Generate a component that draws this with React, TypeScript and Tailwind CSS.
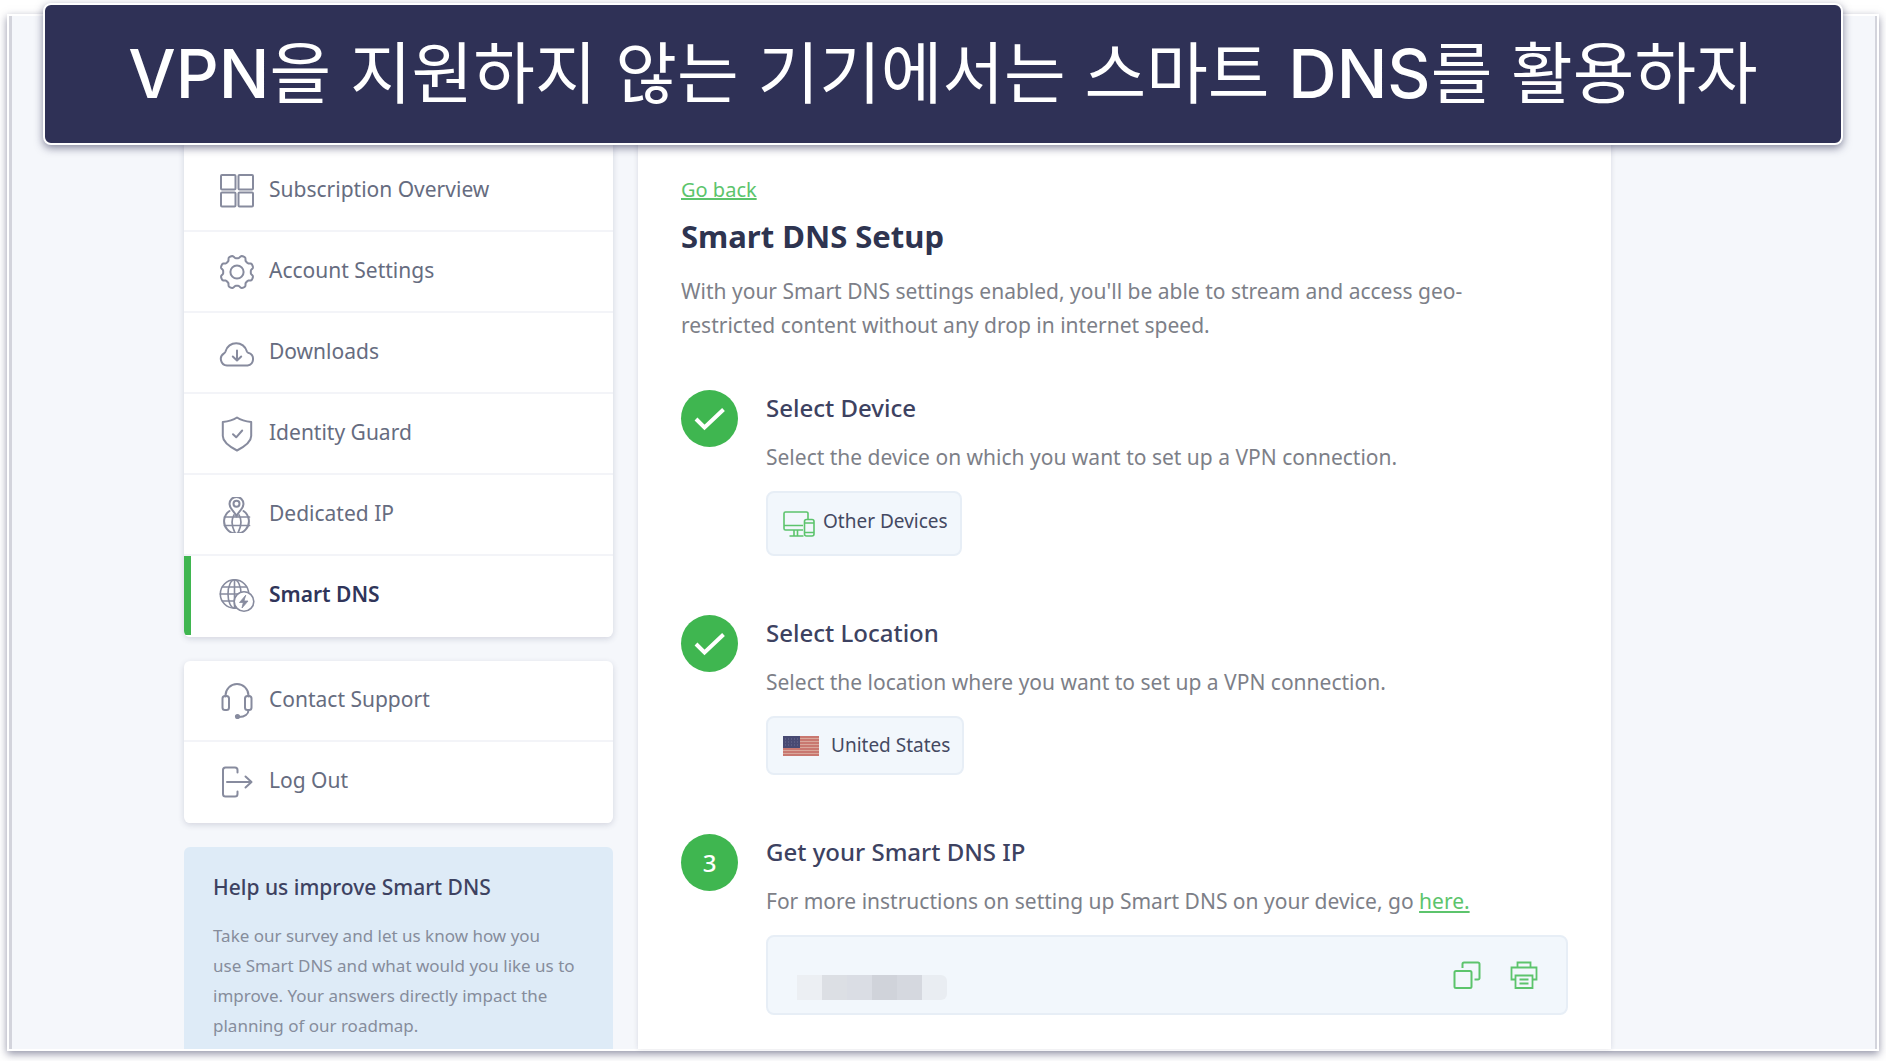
import type { ReactNode } from "react";

interface IconProps {
	children: ReactNode;
	className?: string;
}

const Icon = ({ children, className = "size-9" }: IconProps) => (
	<svg
		viewBox="0 0 36 36"
		fill="none"
		stroke="currentColor"
		strokeWidth="2"
		strokeLinecap="round"
		strokeLinejoin="round"
		aria-hidden="true"
		className={`shrink-0 ${className}`}
	>
		{children}
	</svg>
);

// wavy outline with eight soft teeth
const gearPath = () => {
	const points: string[] = [];
	for (let i = 0; i < 128; i++) {
		const angle = (i / 128) * Math.PI * 2;
		const wave = Math.tanh(-2 * Math.cos(angle * 8)) / Math.tanh(2);
		const r = 15.3 + wave * 1.5;
		points.push(
			`${(18 + r * Math.cos(angle)).toFixed(2)} ${(18 + r * Math.sin(angle)).toFixed(2)}`
		);
	}
	return `M${points.join("L")}Z`;
};

const GridIcon = () => (
	<Icon>
		<rect x="2" y="2" width="14.5" height="14.5" rx="1" />
		<rect x="19.5" y="2" width="14.5" height="14.5" rx="1" />
		<rect x="2" y="19.5" width="14.5" height="14" rx="1" />
		<rect x="19.5" y="19.5" width="14.5" height="14" rx="1" />
	</Icon>
);

const GearIcon = () => (
	<Icon>
		<path d={gearPath()} />
		<circle cx="18" cy="18" r="6.6" />
	</Icon>
);

const CloudIcon = () => (
	<Icon>
		<path d="M8 30.5a6.6 6.6 0 0 1-3-12.2c.8-.5 1.3-1.2 1.6-2.1a11 11 0 0 1 21.2 0c.3.9.9 1.5 1.8 1.7A6.5 6.5 0 0 1 28.5 30.5Z" />
		<path d="M18 15.5v9.5M13.8 21.5l4.2 4 4.2-4" />
	</Icon>
);

const ShieldIcon = () => (
	<Icon>
		<path d="M18 1.5c4 2.8 9 4 14.2 4.4V20c0 5.5-6.5 10.5-14.2 14.500C10.300 30.500 3.800 25.500 3.800 20V5.900C9 5.500 14 4.300 18 1.500Z" />
		<path d="m14 18.300 3.200 3 6-6.800" />
	</Icon>
);

const DedicatedIcon = () => (
	<Icon>
		<path d="M10.500 14a12.400 12.400 0 1 0 14 0" />
		<path d="M5.500 20h25M5.500 28.500h25M15 18c-3 5-2 12 1 18M20 18c3 5 2 12-1 18" strokeWidth="1.700" />
		<path d="M17.500 19.500c-1.300-4.500-7-7.500-7-12.500a7 7 0 0 1 14 0c0 5-5.700 8-7 12.500Z" fill="white" />
		<circle cx="17.500" cy="6.800" r="3" />
	</Icon>
);

const SmartIcon = () => (
	<Icon>
		<g strokeWidth="1.600">
			<circle cx="15.500" cy="16" r="14.200" />
			<ellipse cx="15.500" cy="16" rx="6.500" ry="14.200" />
			<path d="M15.500 1.800v28.400M1.300 16h28.400M3.500 9h24M3.500 23h24" />
		</g>
		<circle cx="25" cy="23.500" r="9.800" strokeWidth="1.600" fill="white" />
		<path d="M26.500 17.500l-6 7h3.800l-1.300 5.500 6-7h-3.800Z" fill="currentColor" strokeWidth=".8" />
	</Icon>
);

const HeadsetIcon = () => (
	<Icon>
		<path d="M6.500 13.500v-1a11.500 11.500 0 0 1 23 0v1" />
		<rect x="3.500" y="13" width="6.500" height="14" rx="2.500" />
		<rect x="26" y="13" width="6.500" height="14" rx="2.500" />
		<path d="M29.500 27c0 4-3.500 6.800-9.500 7" />
		<circle cx="18.500" cy="33.500" r="1.600" fill="currentColor" />
	</Icon>
);

const LogOutIcon = () => (
	<Icon>
		<path d="M18.500 8.500V6a2.500 2.500 0 0 0-2.500-2.500H6.500A2.500 2.500 0 0 0 4 6v24a2.500 2.500 0 0 0 2.500 2.500H16a2.500 2.500 0 0 0 2.500-2.500v-2.500" />
		<path d="M8 18h24M26.500 12.500l6 5.500-6 5.500" />
	</Icon>
);

const DevicesIcon = () => (
	<svg
		viewBox="0 0 32 26"
		fill="none"
		stroke="currentColor"
		strokeWidth="1.600"
		strokeLinejoin="round"
		aria-hidden="true"
		className="h-[26px] w-8 shrink-0 text-[#5cc46c]"
	>
		<path d="M20 19H2.500A1.500 1.500 0 0 1 1 17.500v-15A1.500 1.500 0 0 1 2.500 1h21A1.500 1.500 0 0 1 25 2.500V8" />
		<path d="M1 14.500h19M11 19v5.500M14.500 19v5.500M6.500 25h14" />
		<rect x="21.500" y="8.500" width="9.500" height="16.500" rx="2" />
		<path d="M21.500 12h9.500M21.500 21.500h9.500" />
	</svg>
);

const FlagIcon = () => (
	<svg viewBox="0 0 36 20" aria-hidden="true" className="h-5 w-9 shrink-0">
		<rect width="36" height="20" fill="#d9a79b" />
		<path d="M0 1h36M0 4h36M0 7h36M0 10h36M0 13h36M0 16h36M0 19h36" stroke="#c46a63" strokeWidth="1.500" />
		<rect width="17" height="12" fill="#484a73" />
		<path d="M2 3h14M2 6h14M2 9h14" stroke="#6d6e94" strokeDasharray="1 2" />
	</svg>
);

const CopyIcon = () => (
	<svg viewBox="0 0 28 28" fill="none" stroke="currentColor" strokeWidth="2" aria-hidden="true" className="size-7">
		<rect x="1.500" y="10" width="17" height="17" rx="1.500" />
		<path d="M9.500 7V3A1.500 1.500 0 0 1 11 1.500h14A1.500 1.500 0 0 1 26.500 3v14a1.500 1.500 0 0 1-1.500 1.500h-3.500" />
	</svg>
);

const PrinterIcon = () => (
	<svg viewBox="0 0 28 28" fill="none" stroke="currentColor" strokeWidth="1.800" aria-hidden="true" className="size-7">
		<path d="M7.500 6V1.500h13V6M5.500 18.500h-4v-12h25v12h-4" />
		<path d="M5.500 14.500h17v12.500h-17ZM9.500 18.500h9M9.500 22.500h9" />
	</svg>
);

interface NavItemProps {
	label: string;
	icon: ReactNode;
	active?: boolean;
}

const NavItem = ({ label, icon, active }: NavItemProps) => (
	<li className="border-b-2 border-[#f3f4f8] last:border-white">
		<a
			href="#"
			aria-current={active ? "page" : undefined}
			className={`flex h-[79px] items-center gap-3.5 border-l-[7px] pl-7 text-[#878b9e] ${
				active ? "border-[#3fb650]" : "border-transparent"
			}`}
		>
			{icon}
			<span
				className={`pb-1 text-[21px] leading-7 ${
					active ? "font-semibold text-[#30355a]" : "text-[#666c80]"
				}`}
			>
				{label}
			</span>
		</a>
	</li>
);

interface StepProps {
	title: string;
	description: ReactNode;
	marker: ReactNode;
	children: ReactNode;
}

const Step = ({ title, description, marker, children }: StepProps) => (
	<li className="flex gap-7">
		<div className="flex size-[57px] shrink-0 items-center justify-center rounded-full bg-[#3fb650] text-[24px] font-medium text-white">
			{marker}
		</div>
		<div className="min-w-0 flex-1">
			<h2 className="text-[24px] leading-9 font-medium text-[#3d4261]">{title}</h2>
			<p className="mt-3.5 text-[21px] leading-[34px] text-[#7d7f88]">{description}</p>
			<div className="mt-[17px]">{children}</div>
		</div>
	</li>
);

const CheckMark = () => (
	<svg viewBox="0 0 32 24" fill="none" stroke="white" strokeWidth="4" aria-hidden="true" className="h-6 w-8">
		<path d="m2 12 8.500 8.500L29.500 2.500" strokeLinejoin="miter" />
	</svg>
);

const mosaic = ["bg-[#eceff3]", "bg-[#dcdfe4]", "bg-[#dadde4]", "bg-[#d0d3da]", "bg-[#d5d8df]", "bg-[#e9edf2]"];

const Sidebar = () => (
	<aside className="flex w-[429px] shrink-0 flex-col gap-6">
		<nav className="overflow-hidden rounded-md bg-white pt-[11px] shadow-[0_2px_6px_rgba(40,45,80,0.16)]">
			<ul>
				<NavItem label="Subscription Overview" icon={<GridIcon />} />
				<NavItem label="Account Settings" icon={<GearIcon />} />
				<NavItem label="Downloads" icon={<CloudIcon />} />
				<NavItem label="Identity Guard" icon={<ShieldIcon />} />
				<NavItem label="Dedicated IP" icon={<DedicatedIcon />} />
				<NavItem label="Smart DNS" icon={<SmartIcon />} active />
			</ul>
		</nav>
		<nav className="overflow-hidden rounded-md bg-white shadow-[0_2px_6px_rgba(40,45,80,0.16)]">
			<ul>
				<NavItem label="Contact Support" icon={<HeadsetIcon />} />
				<NavItem label="Log Out" icon={<LogOutIcon />} />
			</ul>
		</nav>
		<section className="flex-1 rounded-t-md bg-[#deebf7] px-[29px] pt-6">
			<h2 className="text-[21px] leading-8 font-medium text-[#3d4261]">Help us improve Smart DNS</h2>
			<p className="mt-[18px] text-[17px] leading-[30px] text-[#868d9c]">
				Take our survey and let us know how you
				<br />
				use Smart DNS and what would you like us to improve. Your answers directly impact the planning of
				our roadmap.
			</p>
		</section>
	</aside>
);

export default function App() {
	return (
		<div className="relative flex min-h-screen flex-col bg-white px-[7px] pt-[14px] pb-[10px] font-['Noto_Sans','Noto_Sans_CJK_KR',sans-serif]">
			<header className="absolute inset-x-[43px] top-[3px] flex h-[142px] items-center justify-center rounded-lg border-2 border-white bg-[#2f3156] pb-0.5 shadow-[0_3px_9px_rgba(40,42,80,0.55)]">
				<h1 className="font-['Inter','Noto_Sans_CJK_KR',sans-serif] text-[67px] leading-none font-medium whitespace-nowrap text-white">
					VPN<span className="font-normal">을 지원하지 않는 기기에서는 스마트 </span>DNS
					<span className="font-normal">를 활용하자</span>
				</h1>
			</header>

			<div className="flex flex-1 border-2 border-white shadow-[0_3px_8px_rgba(40,42,80,0.5)]">
				<div className="flex flex-1 gap-[25px] border-r-2 border-l-[3px] border-[#d3d4dc] bg-[#f5f7fb] pt-[124px] pr-[264px] pl-[172px]">
					<Sidebar />
					<main className="min-w-0 flex-1 bg-white px-[43px] pt-9 pb-[31px] shadow-[0_0_5px_rgba(40,45,80,0.14)]">
						<a href="#" className="inline-block text-[20px] leading-7 text-[#5cc46c] underline">
							Go back
						</a>
						<h1 className="mt-3 text-[31px] leading-10 font-bold text-[#2e3450]">Smart DNS Setup</h1>
						<p className="mt-[18px] max-w-[820px] text-[21px] leading-[34px] text-[#7d7f88]">
							With your Smart DNS settings enabled, you'll be able to stream and access geo-restricted
							content without any drop in internet speed.
						</p>

						<ol className="mt-12 flex flex-col gap-[59px]">
							<Step
								title="Select Device"
								description="Select the device on which you want to set up a VPN connection."
								marker={<CheckMark />}
							>
								<button className="flex h-[65px] items-center gap-2 rounded-lg border-2 border-[#e7eef6] bg-[#f2f7fc] pr-3 pl-[15px] text-[19px] text-[#444962]">
									<DevicesIcon />
									<span className="pb-1">Other Devices</span>
								</button>
							</Step>
							<Step
								title="Select Location"
								description="Select the location where you want to set up a VPN connection."
								marker={<CheckMark />}
							>
								<button className="flex h-[59px] items-center gap-3 rounded-lg border-2 border-[#e7eef6] bg-[#f2f7fc] pr-3 pl-[15px] text-[19px] text-[#444962]">
									<FlagIcon />
									<span>United States</span>
								</button>
							</Step>
							<Step
								title="Get your Smart DNS IP"
								description={
									<>
										For more instructions on setting up Smart DNS on your device, go{" "}
										<a href="#" className="text-[#5cc46c] underline">
											here.
										</a>
									</>
								}
								marker="3"
							>
								<div className="flex h-20 items-center rounded-lg border-2 border-[#e7eef6] bg-[#f2f7fc] pr-7 pl-[29px] text-[#5cc46c]">
									<div className="mt-6 flex h-[25px] overflow-hidden rounded-r-md">
										{mosaic.map((shade, i) => (
											<span key={i} className={`w-[25px] ${shade}`} />
										))}
									</div>
									<div className="ml-auto flex gap-[29px]">
										<button aria-label="Copy">
											<CopyIcon />
										</button>
										<button aria-label="Print">
											<PrinterIcon />
										</button>
									</div>
								</div>
							</Step>
						</ol>
					</main>
				</div>
			</div>
		</div>
	);
}
